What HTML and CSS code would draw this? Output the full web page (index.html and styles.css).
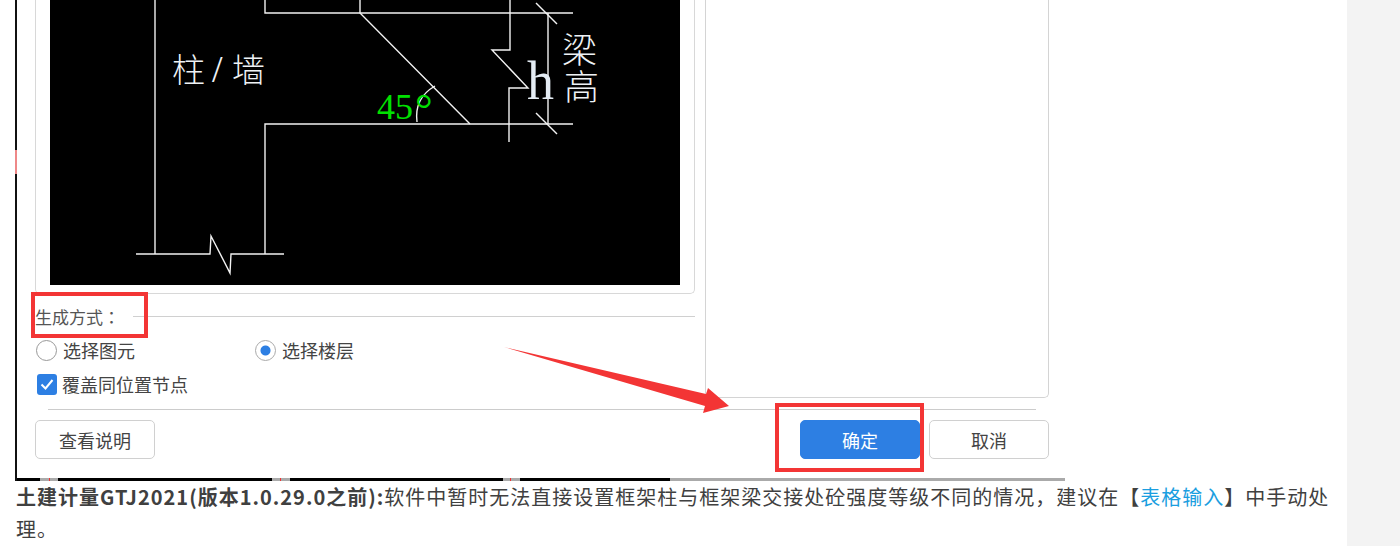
FILE: index.html
```html
<!DOCTYPE html>
<html lang="zh-CN">
<head>
    <meta charset="UTF-8">
    <title>土建计量GTJ2021</title>
    <link rel="stylesheet" href="styles.css">
</head>
<body>

<div class="page">
    <div class="main">

        <!-- 截图 -->
        <div class="shot">
            <div class="shot-mark"></div>
            <div class="dialog-top">
                <div class="dialog-left">
                    <div class="diagram-panel">
                        <svg class="diagram" viewBox="50 0 630 285" width="630" height="285">
                            <g class="cad-lines">
                                <path d="M155 0V254"/>
                                <path d="M265 0V13H573"/>
                                <path d="M360 0V13L470 124"/>
                                <path d="M510 0V50H492L528 88H509V142"/>
                                <path d="M573 124H265V254"/>
                                <path d="M136 254H210L211 236L230 273L231 254H284"/>
                                <path d="M548 13V124"/>
                                <path d="M536 3L557 24"/>
                                <path d="M536 113L557 134"/>
                                <path d="M435 86Q414 98 417 122"/>
                            </g>
                            <text class="cad-text" x="172" y="82" font-size="33">柱</text>
                            <text class="cad-text" x="212" y="82" font-size="38">/</text>
                            <text class="cad-text" x="232" y="82" font-size="33">墙</text>
                            <text class="cad-text" x="562" y="63" font-size="35">梁</text>
                            <text class="cad-text" x="564" y="100" font-size="35">高</text>
                            <text class="cad-h" x="527" y="99" font-size="54">h</text>
                            <text class="cad-green" x="377" y="119" font-size="36">45</text>
                            <text class="cad-green" x="415" y="124" font-size="44">°</text>
                        </svg>
                    </div>

                    <div class="legend">
                        <span lang="zh-TW">生成方式：</span>
                        <div class="legend-line"></div>
                    </div>

                    <div class="radio-row">
                        <label class="radio-item"><span class="radio"></span>选择图元</label>
                        <label class="radio-item"><span class="radio radio-on"></span>选择楼层</label>
                    </div>

                    <label class="check-row">
                        <span class="check">
                            <svg viewBox="0 0 20 20" width="20" height="20"><path d="M4.5 10.5L8.5 14.5L15.5 6"/></svg>
                        </span>
                        覆盖同位置节点
                    </label>
                </div>
                <div class="dialog-right"></div>
            </div>

            <div class="divider"></div>

            <div class="footer">
                <button class="btn">查看说明</button>
                <div class="footer-right">
                    <button class="btn btn-primary">确定</button>
                    <button class="btn">取消</button>
                </div>
            </div>

            <div class="shot-edge"></div>
        </div>

        <p class="desc"><strong>土建计量GTJ2021(版本1.0.29.0之前):</strong>软件中暂时无法直接设置框架柱与框架梁交接处砼强度等级不同的情况，建议在【<a href="#">表格输入</a>】中手动处理。</p>

        <!-- 标注 -->
        <div class="note-box note-legend"></div>
        <div class="note-box note-ok"></div>
        <svg class="note-arrow" viewBox="0 0 240 80" width="240" height="80">
            <polygon points="4,7 206,54 208,48 229,66 203,73 205,66"/>
        </svg>
    </div>
    <div class="strip"></div>
</div>

</body>
</html>
```

FILE: styles.css
```css
html, body {
    margin: 0;
    padding: 0;
    background: #fff;
}
body {
    font-family: "Noto Sans CJK SC", "Liberation Sans", sans-serif;
    color: #444;
}
.page {
    display: flex;
    height: 546px;
    overflow: hidden;
}
.main {
    position: relative;
    width: 1347px;
    flex: none;
}
.strip {
    flex: 1;
    background-color: #f3f3f3;
}

/* screenshot */
.shot {
    position: relative;
    display: flex;
    flex-direction: column;
    box-sizing: border-box;
    width: 1050px;
    height: 481px;
    margin-left: 15px;
    border-left: 2px solid #111;
}
.shot-mark {
    position: absolute;
    left: -2px;
    top: 150px;
    width: 2px;
    height: 24px;
    background: #e88;
}
.shot-edge {
    position: absolute;
    left: 0;
    bottom: 0;
    width: 100%;
    height: 3px;
    background: linear-gradient(to right,
        #000 0, #000 23px, #aaa 23px, #aaa 32px, #e33 32px, #e33 33px, #aaa 33px, #aaa 41px,
        #000 41px, #000 255px, #aaa 255px, #aaa 263px, #e33 263px, #e33 264px, #aaa 264px, #aaa 273px,
        #000 273px, #000 486px, #aaa 486px, #aaa 493px, #e33 493px, #e33 494px, #aaa 494px, #aaa 503px,
        #000 503px, #000 653px, #aaa 653px, #aaa 100%);
}
.dialog-top {
    display: flex;
    gap: 10px;
    padding-left: 18px;
}
.dialog-left {
    width: 660px;
}
.dialog-right {
    box-sizing: border-box;
    width: 344px;
    height: 398px;
    border: 1px solid #d4d4d4;
    border-top: none;
    border-radius: 0 0 5px 5px;
}
.diagram-panel {
    box-sizing: border-box;
    height: 294px;
    padding: 0 14px;
    border: 1px solid #d8d8d8;
    border-top: none;
    border-radius: 0 0 5px 5px;
}
.diagram {
    display: block;
    background: #000;
}
.cad-lines path {
    fill: none;
    stroke: #f2f2f2;
    stroke-width: 1.4;
}
.cad-text {
    font-family: "Liberation Serif", "Noto Sans CJK SC", serif;
    font-weight: 300;
    fill: #eef2f5;
}
.cad-h {
    font-family: "Liberation Serif", serif;
    fill: #e4ecf4;
}
.cad-green {
    font-family: "Liberation Serif", serif;
    fill: #00e000;
}
.legend {
    display: flex;
    align-items: center;
    height: 20px;
    margin-top: 12px;
    font-family: "Noto Sans CJK TC", sans-serif;
    font-size: 17px;
    color: #555;
}
.legend span {
    flex: none;
}
.legend-line {
    flex: 1;
    height: 1px;
    margin-left: 13px;
    background: #d0d0d0;
}
.radio-row {
    display: flex;
    height: 20px;
    margin-top: 14px;
    padding-left: 1px;
}
.radio-item {
    display: flex;
    align-items: center;
    width: 219px;
    font-size: 18px;
}
.radio {
    box-sizing: border-box;
    width: 21px;
    height: 21px;
    margin-right: 6px;
    border: 1px solid #999;
    border-radius: 50%;
    background: #fff;
}
.radio-on {
    border-color: #aaa;
    background: radial-gradient(circle, #2d7fe3 0, #2d7fe3 4.5px, #fff 5.5px);
}
.check-row {
    display: flex;
    align-items: center;
    height: 20px;
    margin-top: 14px;
    padding-left: 2px;
    font-size: 18px;
}
.check {
    width: 20px;
    height: 21px;
    margin-right: 5px;
    border-radius: 3px;
    background-color: #2d7fe3;
}
.check svg {
    display: block;
}
.check path {
    fill: none;
    stroke: #fff;
    stroke-width: 2;
}
.divider {
    height: 1px;
    margin: 11px 29px 0 31px;
    background: #ccc;
}
.footer {
    display: flex;
    justify-content: space-between;
    margin-top: 10px;
    padding: 0 16px 0 18px;
}
.footer-right {
    display: flex;
    gap: 9px;
}
.btn {
    box-sizing: border-box;
    width: 120px;
    height: 39px;
    padding: 0;
    border: 1px solid #d0d0d0;
    border-radius: 5px;
    background: #fff;
    color: #444;
    font-family: inherit;
    font-size: 18px;
}
.btn-primary {
    border-color: #2d7fe3;
    background-color: #2d7fe3;
    color: #fff;
}

/* text under the picture */
.desc {
    width: 1318px;
    margin: 0;
    padding-left: 16px;
    font-size: 20px;
    letter-spacing: 1px;
    line-height: 32px;
    color: #404040;
}
.desc a {
    color: #1a9ee0;
    text-decoration: none;
}

/* annotations */
.note-box {
    position: absolute;
    box-sizing: border-box;
    border: 4px solid #f33535;
}
.note-legend {
    left: 31px;
    top: 292px;
    width: 117px;
    height: 46px;
}
.note-ok {
    left: 775px;
    top: 403px;
    width: 149px;
    height: 69px;
}
.note-arrow {
    position: absolute;
    left: 500px;
    top: 340px;
}
.note-arrow polygon {
    fill: #f33535;
}
```
